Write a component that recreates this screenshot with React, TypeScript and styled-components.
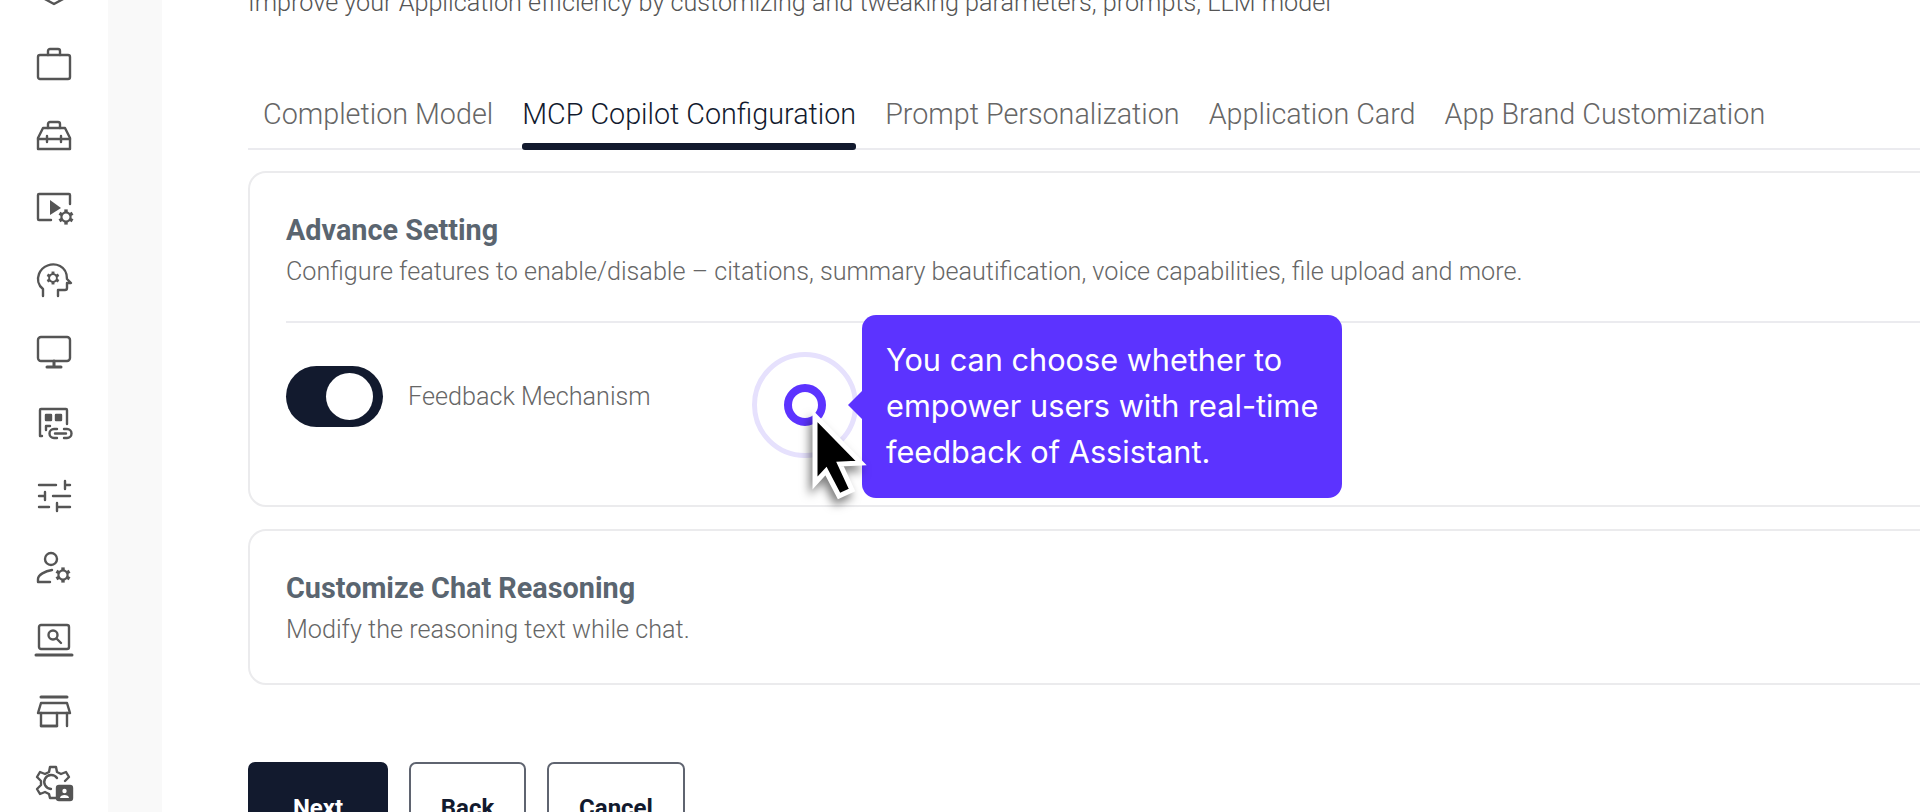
import React from "react";
import styled, { createGlobalStyle } from "styled-components";

const GlobalStyle = createGlobalStyle`
  html, body {
    margin: 0;
    padding: 0;
    height: 100%;
    overflow: hidden;
    background: #fff;
    font-family: "Roboto", "Liberation Sans", sans-serif;
  }
`;

const Page = styled.div`
  display: flex;
  flex-direction: row;
  position: relative;
  width: 1920px;
  height: 812px;
  overflow: hidden;
  background: #fff;
`;

const Sidebar = styled.div`
  display: flex;
  flex-direction: column;
  align-items: center;
  flex: 0 0 108px;
  margin-top: -26px;
  gap: 36px;
`;

const NavIcon = styled.svg`
  flex: 0 0 36px;
  width: 36px;
  height: 36px;
  fill: none;
  stroke: #555;
  stroke-width: 2.4;
  stroke-linecap: round;
  stroke-linejoin: round;
  overflow: visible;
`;

const Gutter = styled.div`
  flex: 0 0 54px;
  background: #f9f9f9;
`;

const Main = styled.div`
  flex: 1;
  min-width: 0;
  padding: 0 0 0 86px;
  margin-top: -12px;
`;

const Subtitle = styled.p`
  margin: 0;
  font-size: 25.2px;
  line-height: 30px;
  font-weight: 300;
  color: #555;
  white-space: nowrap;
`;

const Tabs = styled.div`
  display: flex;
  gap: 29px;
  height: 78px;
  margin-top: 52px;
  padding-left: 15px;
  border-bottom: 2px solid #ebebef;
`;

const Tab = styled.div<{ $active?: boolean }>`
  position: relative;
  height: 80px;
  font-size: 28.72px;
  line-height: 88px;
  font-weight: 300;
  white-space: nowrap;
  color: ${({ $active }) => ($active ? "#121a2e" : "#666")};
  ${({ $active }) =>
    $active &&
    `&::after {
      content: "";
      position: absolute;
      left: 0;
      right: 0;
      bottom: 0;
      height: 7px;
      border-radius: 3px;
      background: #121a2e;
    }`}
`;

const Card = styled.section<{ $height: number; $top: number }>`
  box-sizing: border-box;
  height: ${({ $height }) => $height}px;
  margin-top: ${({ $top }) => $top}px;
  margin-right: -20px;
  padding: 39px 0 0 36px;
  border: 2px solid #ebebed;
  border-radius: 18px;
`;

const CardTitle = styled.h3`
  margin: 0;
  font-size: 28.8px;
  line-height: 36px;
  font-weight: 700;
  color: #5a6570;
`;

const CardText = styled.p`
  margin: 6px 0 0;
  font-size: 25.2px;
  line-height: 36px;
  font-weight: 300;
  color: #666;
  white-space: nowrap;
`;

const Divider = styled.div`
  height: 2px;
  margin-top: 31px;
  background: #ebebef;
`;

const OptionRow = styled.div`
  display: flex;
  align-items: center;
  gap: 25px;
  margin-top: 43px;
`;

const Toggle = styled.div`
  display: flex;
  align-items: center;
  justify-content: flex-end;
  box-sizing: border-box;
  width: 97px;
  height: 61px;
  padding-right: 10px;
  border-radius: 31px;
  background: #121a2e;
`;

const Knob = styled.div`
  width: 47px;
  height: 47px;
  border-radius: 50%;
  background: #fff;
`;

const OptionLabel = styled.span`
  font-size: 25.2px;
  font-weight: 300;
  color: #666;
`;

const Actions = styled.div`
  display: flex;
  gap: 21px;
  margin-top: 77px;
`;

const ActionButton = styled.button<{ $primary?: boolean; $width: number }>`
  box-sizing: border-box;
  width: ${({ $width }) => $width}px;
  height: 92px;
  border: 2px solid ${({ $primary }) => ($primary ? "#121a2e" : "#5f6470")};
  border-radius: 7px;
  background: ${({ $primary }) => ($primary ? "#121a2e" : "#fff")};
  color: ${({ $primary }) => ($primary ? "#fff" : "#121a2e")};
  font-family: inherit;
  font-size: 24px;
  font-weight: 700;
`;

const Hotspot = styled.div`
  position: absolute;
  left: 752px;
  top: 352px;
  display: flex;
  align-items: center;
  justify-content: center;
  box-sizing: border-box;
  width: 106px;
  height: 106px;
  border: 5px solid #e6e1fd;
  border-radius: 50%;
`;

const HotspotDot = styled.div`
  box-sizing: border-box;
  width: 42px;
  height: 42px;
  border: 8px solid #5c33ff;
  border-radius: 50%;
`;

const Tooltip = styled.div`
  position: absolute;
  left: 862px;
  top: 315px;
  box-sizing: border-box;
  width: 480px;
  height: 183px;
  padding: 22px 0 0 24px;
  border-radius: 14px;
  background: #5c33ff;
  color: #fff;
  font-family: "Inter", "Liberation Sans", sans-serif;
  font-size: 30.7px;
  line-height: 46px;
  white-space: nowrap;

  &::before {
    content: "";
    position: absolute;
    left: -14px;
    top: 76px;
    border-top: 14px solid transparent;
    border-bottom: 14px solid transparent;
    border-right: 14px solid #5c33ff;
  }
`;

const Cursor = styled.svg`
  position: absolute;
  left: 806px;
  top: 410px;
  width: 64px;
  height: 96px;
  filter: drop-shadow(-3px 6px 5px rgba(0, 0, 0, 0.5));
`;

// small cog used by several of the nav icons
const Gear = ({ x, y, size = 1 }: { x: number; y: number; size?: number }) => (
  <g transform={`translate(${x} ${y}) scale(${size})`}>
    <circle r="4.6" strokeWidth="2.2" />
    {[0, 60, 120, 180, 240, 300].map((a) => (
      <path key={a} d="M0 -4.8 V-7.6" transform={`rotate(${a})`} strokeWidth="3.4" strokeLinecap="butt" />
    ))}
  </g>
);

const navIcons: React.ReactNode[] = [
  // only the bottom of this one shows at the top edge
  <path key="a" d="M7 24 L18 30 L29 24" />,
  <g key="b">
    <rect x="2" y="9" width="32" height="24" rx="2" />
    <path d="M12 9 V5 a2 2 0 0 1 2-2 h8 a2 2 0 0 1 2 2 V9" />
  </g>,
  <g key="c">
    <path d="M2 20 L7 10 H29 L34 20 V31 H2 Z" />
    <path d="M12 10 V6 a2 2 0 0 1 2-2 h8 a2 2 0 0 1 2 2 V10" />
    <path d="M2 21 H34 M11 18 V24 M25 18 V24" />
  </g>,
  <g key="d">
    <path d="M15 30 H3 a1 1 0 0 1-1-1 V5 a1 1 0 0 1 1-1 H33 a1 1 0 0 1 1 1 V14" />
    <path d="M14 10 L25 18 L14 25 Z" fill="#555" stroke="none" />
    <Gear x={30} y={27} />
  </g>,
  <g key="e">
    <path d="M7 34 V27 C2 23 1 17 3 12 C6 4 16 0 24 4 C30 7 31 13 31 17 L35 21 H31 V26 a2 2 0 0 1-2 2 H22 V34" />
    <Gear x={17} y={16} size={0.85} />
  </g>,
  <g key="f">
    <rect x="2" y="3" width="32" height="24" rx="3" />
    <path d="M18 27 V33 M11 33 H25" strokeWidth="3" />
  </g>,
  <g key="g">
    <path d="M6 30 H4 V4 a1 1 0 0 1 1-1 H30 a1 1 0 0 1 1 1 V18" />
    <rect x="10" y="9" width="5" height="5" fill="#555" />
    <rect x="20" y="9" width="5" height="5" fill="#555" />
    <path d="M10 24 V20 H14" />
    <path d="M21 23 H18 a4.5 4.5 0 0 0 0 9 H21 M28 23 H31 a4.5 4.5 0 0 1 0 9 H28 M19 27.5 H30" />
  </g>,
  <g key="h">
    <path d="M3 7 H20 M29 7 H34 M29 3 V11" />
    <path d="M3 18 H9 M9 14 V22 M17 18 H34" />
    <path d="M3 29 H13 M21 29 H34 M21 25 V33" />
  </g>,
  <g key="i">
    <circle cx="15" cy="9" r="6" />
    <path d="M14 32 H2 V29 C2 25 9 21 16 20" />
    <Gear x={27} y={25} />
  </g>,
  <g key="j">
    <rect x="3" y="3" width="30" height="24" rx="2" />
    <path d="M0 33 H36" strokeWidth="3" />
    <circle cx="17" cy="13" r="4.5" />
    <path d="M20.5 16.5 L25 21" />
  </g>,
  <g key="k">
    <path d="M5 3 H31" strokeWidth="3" />
    <path d="M5 9 H31 L34 19 H2 Z" />
    <path d="M5 19 V32 H21 V19 M31 19 V32" />
    <path d="M5 32 H21" />
  </g>,
  <g key="l">
    <path d="M20 32 H14 L13 28 L9 26 L4 28 L1 23 L5 19 V15 L1 11 L4 6 L9 8 L13 6 L14 1 H20 L21 6 L25 8 L30 6 L33 11 L29 15" />
    <path d="M21 12 A7 7 0 1 0 15 23" />
    <rect x="21" y="20" width="15" height="14" rx="2" fill="#555" />
    <circle cx="28.5" cy="25" r="2.2" fill="#fff" stroke="none" />
    <path d="M24 32 C24 28 33 28 33 32 Z" fill="#fff" stroke="none" />
  </g>,
];

const tabs = [
  "Completion Model",
  "MCP Copilot Configuration",
  "Prompt Personalization",
  "Application Card",
  "App Brand Customization",
];

export default function App() {
  return (
    <Page>
      <GlobalStyle />
      <Sidebar>
        {navIcons.map((icon, i) => (
          <NavIcon key={i} viewBox="0 0 36 36">
            {icon}
          </NavIcon>
        ))}
      </Sidebar>
      <Gutter />
      <Main>
        <Subtitle>
          Improve your Application efficiency by customizing and tweaking parameters, prompts, LLM model
        </Subtitle>
        <Tabs>
          {tabs.map((t) => (
            <Tab key={t} $active={t === "MCP Copilot Configuration"}>
              {t}
            </Tab>
          ))}
        </Tabs>
        <Card $height={336} $top={21}>
          <CardTitle>Advance Setting</CardTitle>
          <CardText>
            Configure features to enable/disable – citations, summary beautification, voice capabilities, file upload and more.
          </CardText>
          <Divider />
          <OptionRow>
            <Toggle>
              <Knob />
            </Toggle>
            <OptionLabel>Feedback Mechanism</OptionLabel>
          </OptionRow>
        </Card>
        <Card $height={156} $top={22}>
          <CardTitle>Customize Chat Reasoning</CardTitle>
          <CardText>Modify the reasoning text while chat.</CardText>
        </Card>
        <Actions>
          <ActionButton $primary $width={140}>Next</ActionButton>
          <ActionButton $width={117}>Back</ActionButton>
          <ActionButton $width={138}>Cancel</ActionButton>
        </Actions>
      </Main>
      <Hotspot>
        <HotspotDot />
      </Hotspot>
      <Tooltip>
        You can choose whether to
        <br />
        empower users with real-time
        <br />
        feedback of Assistant.
      </Tooltip>
      <Cursor viewBox="0 0 64 96">
        <path
          d="M9 6 L9 73 L20 61 L33 86 L46 80 L34 54 L55 53 Z"
          fill="#000"
          stroke="#fff"
          strokeWidth="5"
          strokeLinejoin="miter"
        />
      </Cursor>
    </Page>
  );
}
